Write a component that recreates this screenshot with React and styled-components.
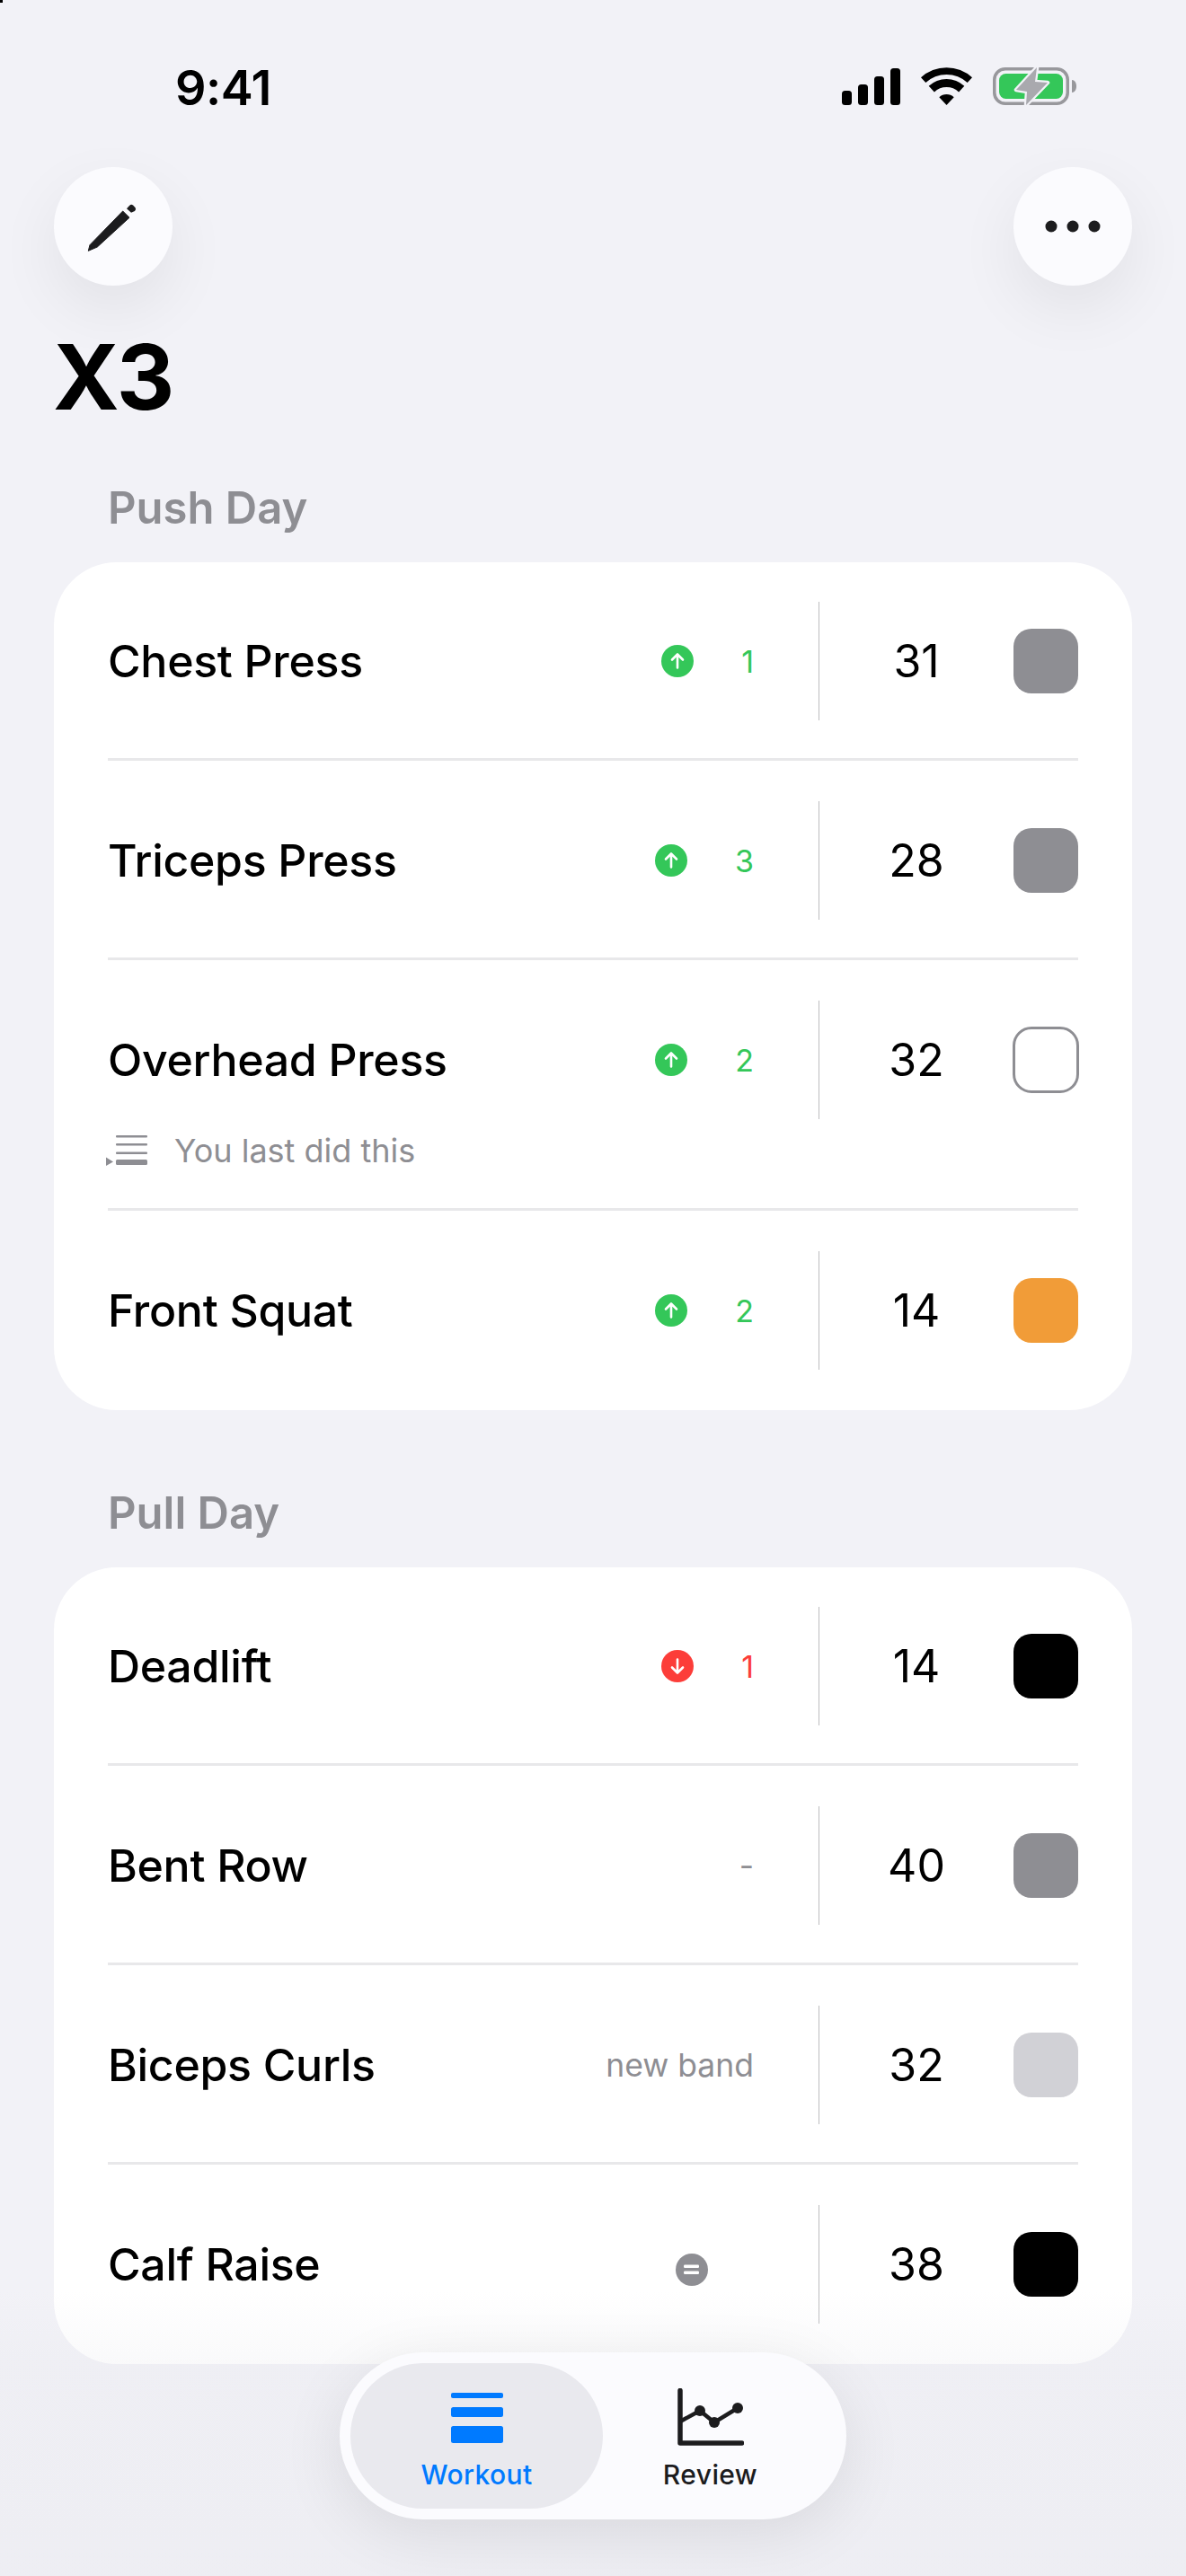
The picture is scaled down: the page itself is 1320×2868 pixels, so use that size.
import React from 'react'
import styled, { createGlobalStyle } from 'styled-components'

const GlobalStyle = createGlobalStyle`
    html, body {
        margin: 0;
        padding: 0;
        background: #f2f2f7;
    }
    * {
        box-sizing: border-box;
    }
`
const Page = styled.div`
    position: relative;
    width: 1320px;
    height: 2868px;
    padding-top: 70px;
    overflow: hidden;
    background: #f2f2f7;
    color: #000;
    font-family: Inter, "Liberation Sans", sans-serif;
`
const CornerDot = styled.div`
    position: absolute;
    top: 0;
    left: 0;
    width: 3px;
    height: 3px;
    background: #000;
`
const StatusBar = styled.div`
    display: flex;
    align-items: center;
    justify-content: space-between;
    height: 56px;
    padding: 0 122px 0 195px;
`
const Time = styled.div`
    font-size: 54px;
    font-weight: 600;
    line-height: 56px;
    letter-spacing: -0.5px;
`
const StatusIcons = styled.div`
    display: flex;
    align-items: center;
    gap: 23px;
    margin-top: -4px;
`
const Toolbar = styled.div`
    display: flex;
    justify-content: space-between;
    padding: 0 60px;
    margin-top: 60px;
`
const RoundButton = styled.div`
    width: 132px;
    height: 132px;
    border-radius: 50%;
    display: flex;
    align-items: center;
    justify-content: center;
    background: #fbfbfe;
    box-shadow: 0 26px 70px rgba(0, 0, 0, 0.07);
`
const Title = styled.h1`
    margin: 42px 0 56px;
    padding-left: 59px;
    font-size: 100px;
    font-weight: 700;
    line-height: 120px;
    letter-spacing: -1px;
`
const SectionLabel = styled.h2`
    margin: 0 0 30px;
    padding-left: 120px;
    font-size: 49px;
    font-weight: 600;
    line-height: 60px;
    color: #8e8e93;
`
const Card = styled.div`
    margin: 0 60px 85px;
    border-radius: 70px;
    background: #fff;
`
const Row = styled.div`
    margin: 0 60px;
    padding: 45px 0 42px;
    border-bottom: 3px solid #e8e8ea;
    &:first-child {
        padding-top: 44px;
    }
    &:last-child {
        padding-bottom: 45px;
        border-bottom: none;
    }
`
const RowMain = styled.div`
    display: flex;
    align-items: center;
    height: 132px;
`
const Name = styled.div`
    flex: 1;
    font-size: 50px;
    font-weight: 550;
    letter-spacing: -0.3px;
`
const Delta = styled.div`
    display: flex;
    align-items: center;
    gap: ${props => props.$gap}px;
    font-size: 34px;
    color: ${props => props.$color};
`
const Badge = styled.div`
    width: 36px;
    height: 36px;
    border-radius: 50%;
    display: flex;
    align-items: center;
    justify-content: center;
    background: ${props => props.$color};
`
const EqualBadge = styled(Badge)`
    margin: 12px 51px 0 0;
`
const Remark = styled.div`
    font-size: 35.5px;
    color: #8e8e93;
`
const Divider = styled.div`
    width: 1px;
    height: 132px;
    margin-left: 72px;
    background: #bdbdbf;
`
const Count = styled.div`
    width: 216px;
    text-align: center;
    font-size: 50px;
    font-weight: 400;
`
const Swatch = styled.div`
    width: 72px;
    height: 72px;
    border-radius: 20px;
    background: ${props => props.$color};
`
const EmptySwatch = styled.div`
    width: 74px;
    height: 74px;
    margin-right: -1px;
    margin-left: -1px;
    border-radius: 21px;
    border: 3px solid #8e8e93;
`
const Note = styled.div`
    display: flex;
    align-items: center;
    gap: 30px;
    height: 44px;
    margin: 13px 0 0 -2px;
    font-size: 36px;
    color: #8e8e93;
`
const BottomFade = styled.div`
    position: absolute;
    left: 0;
    right: 0;
    top: 2550px;
    bottom: 0;
    background: linear-gradient(to bottom, rgba(226, 226, 232, 0) 0, rgba(226, 226, 232, 0.2) 82px, rgba(226, 226, 232, 0.26) 100%);
`
const TabBar = styled.div`
    position: absolute;
    left: 378px;
    bottom: 63px;
    width: 564px;
    height: 186px;
    padding: 12px 32px 12px 12px;
    display: flex;
    border-radius: 93px;
    background: #fbfbfe;
    box-shadow: 0 16px 70px rgba(0, 0, 0, 0.09);
`
const Tab = styled.div`
    flex: ${props => (props.$active ? '0 0 281px' : '1')};
    padding-top: 28px;
    display: flex;
    flex-direction: column;
    align-items: center;
    border-radius: 81px;
    background: ${props => (props.$active ? '#e9e9ee' : 'transparent')};
    color: ${props => (props.$active ? '#007aff' : '#1c1c1e')};
`
const TabLabel = styled.div`
    margin-top: 14px;
    font-size: 30px;
    font-weight: 500;
    line-height: 36px;
    letter-spacing: 0.4px;
`

const SignalIcon = () => (
    <svg width="65" height="41" viewBox="0 0 65 41">
        <rect x="0" y="25" width="11" height="16" rx="3.5" />
        <rect x="18" y="18" width="11" height="23" rx="3.5" />
        <rect x="36" y="9" width="11" height="32" rx="3.5" />
        <rect x="54" y="0" width="11" height="41" rx="3.5" />
    </svg>
)
const WifiIcon = () => (
    <svg width="57" height="42" viewBox="0 0 57 42">
        <path d="M0 11.3A42 42 0 0 1 57 11.3L51.7 17.1A34 34 0 0 0 5.3 17.1Z" />
        <path d="M8.7 20.8A29 29 0 0 1 48.3 20.8L42.1 27.4A20 20 0 0 0 14.9 27.4Z" />
        <path d="M20.3 33.2A12 12 0 0 1 36.7 33.2L28.5 42Z" />
    </svg>
)
const BatteryIcon = () => (
    <svg width="93" height="46" viewBox="0 0 93 46">
        <rect x="1.75" y="3.75" width="81.5" height="38.5" rx="12" fill="none" stroke="#98989c" strokeWidth="3.5" />
        <rect x="7" y="9" width="71" height="28" rx="7.5" fill="#34c759" />
        <path d="M88 16c3 0 5 3 5 7s-2 7-5 7z" fill="#98989c" />
        <path d="M49 2L26 27L38 29L37 44L61 19L47 18Z" fill="#a9a9ae" stroke="#f2f2f7" strokeWidth="4.5" strokeLinejoin="round" paintOrder="stroke" />
    </svg>
)
const PencilIcon = () => (
    <svg width="60" height="60" viewBox="0 0 60 60" fill="#1c1c1e">
        <path d="M2.3 57.3L4 50.7L40.7 13L48 20.3L12.3 53Z" stroke="#1c1c1e" strokeWidth="1" strokeLinejoin="round" />
        <path d="M45 10.3L48 7Q50 5 52 6.5L54.5 9Q56 11 54 13L50 14.7Z" />
    </svg>
)
const MoreIcon = () => (
    <svg width="62" height="14" viewBox="0 0 62 14" fill="#1c1c1e">
        <circle cx="7" cy="7" r="6.5" />
        <circle cx="31" cy="7" r="6.5" />
        <circle cx="55" cy="7" r="6.5" />
    </svg>
)
const ArrowIcon = ({ down }) => (
    <svg width="20" height="20" viewBox="0 0 20 20" fill="none" stroke="#fff" strokeWidth="2.6" strokeLinecap="round" strokeLinejoin="round">
        {down ? <path d="M10 2.5V17M4 11.5L10 17.5L16 11.5" /> : <path d="M10 17.5V3M4 8.5L10 2.5L16 8.5" />}
    </svg>
)
const EqualIcon = () => (
    <svg width="18" height="12" viewBox="0 0 18 12" fill="#fff">
        <rect x="0" y="0.5" width="17" height="3.5" rx="1.2" />
        <rect x="0" y="7.5" width="17" height="3.5" rx="1.2" />
    </svg>
)
const NoteIcon = () => (
    <svg width="46" height="34" viewBox="0 0 46 34" fill="#8e8e93">
        <rect x="11" y="0" width="35" height="2.6" rx="1" />
        <rect x="11" y="9" width="35" height="2.6" rx="1" />
        <rect x="11" y="18.5" width="35" height="2.6" rx="1" />
        <rect x="11" y="27" width="35" height="6" rx="1.5" />
        <path d="M0 24.5L8 29.5L0 34Z" />
    </svg>
)
const WorkoutIcon = () => (
    <svg width="58" height="64" viewBox="0 0 58 64" fill="#007aff">
        <rect x="0" y="5" width="58" height="6" rx="2" />
        <rect x="0" y="21" width="58" height="11" rx="2.5" />
        <rect x="0" y="42" width="58" height="19" rx="2.5" />
    </svg>
)
const ReviewIcon = () => (
    <svg width="74" height="64" viewBox="0 0 74 64" fill="#1c1c1e" stroke="#1c1c1e">
        <path d="M3 2.5V61H71.5" fill="none" strokeWidth="5.5" strokeLinecap="round" strokeLinejoin="round" />
        <path d="M3 37L25 25L41 38L67 22" fill="none" strokeWidth="4.5" />
        <circle cx="25" cy="25" r="6" strokeWidth="0" />
        <circle cx="41" cy="38" r="6" strokeWidth="0" />
        <circle cx="67" cy="22" r="6" strokeWidth="0" />
    </svg>
)

const UP = '#34c759'
const DOWN = '#fc3d39'
const GRAY = '#8e8e93'

const sections = [
    {
        title: 'Push Day',
        rows: [
            { name: 'Chest Press', up: 1, count: 31, color: GRAY },
            { name: 'Triceps Press', up: 3, count: 28, color: GRAY },
            { name: 'Overhead Press', up: 2, count: 32, note: 'You last did this' },
            { name: 'Front Squat', up: 2, count: 14, color: '#f19c38' },
        ],
    },
    {
        title: 'Pull Day',
        rows: [
            { name: 'Deadlift', down: 1, count: 14, color: '#000' },
            { name: 'Bent Row', remark: '-', count: 40, color: GRAY },
            { name: 'Biceps Curls', remark: 'new band', count: 32, color: '#d1d1d6' },
            { name: 'Calf Raise', same: true, count: 38, color: '#000' },
        ],
    },
]

const Change = ({ row }) => {
    if (row.remark) return <Remark>{row.remark}</Remark>
    if (row.same) return <EqualBadge $color={GRAY}><EqualIcon /></EqualBadge>
    const value = row.up || row.down
    return (
        <Delta $color={row.up ? UP : DOWN} $gap={53}>
            <Badge $color={row.up ? UP : DOWN}><ArrowIcon down={!!row.down} /></Badge>
            {value}
        </Delta>
    )
}

const App = () => {
    return (
        <Page>
            <GlobalStyle />
            <CornerDot />
            <StatusBar>
                <Time>9:41</Time>
                <StatusIcons>
                    <SignalIcon />
                    <WifiIcon />
                    <BatteryIcon />
                </StatusIcons>
            </StatusBar>
            <Toolbar>
                <RoundButton><PencilIcon /></RoundButton>
                <RoundButton><MoreIcon /></RoundButton>
            </Toolbar>
            <Title>X3</Title>
            {sections.map(section => (
                <React.Fragment key={section.title}>
                    <SectionLabel>{section.title}</SectionLabel>
                    <Card>
                        {section.rows.map(row => (
                            <Row key={row.name}>
                                <RowMain>
                                    <Name>{row.name}</Name>
                                    <Change row={row} />
                                    <Divider />
                                    <Count>{row.count}</Count>
                                    {row.color ? <Swatch $color={row.color} /> : <EmptySwatch />}
                                </RowMain>
                                {row.note && (
                                    <Note>
                                        <NoteIcon />
                                        {row.note}
                                    </Note>
                                )}
                            </Row>
                        ))}
                    </Card>
                </React.Fragment>
            ))}
            <BottomFade />
            <TabBar>
                <Tab $active>
                    <WorkoutIcon />
                    <TabLabel>Workout</TabLabel>
                </Tab>
                <Tab>
                    <ReviewIcon />
                    <TabLabel>Review</TabLabel>
                </Tab>
            </TabBar>
        </Page>
    )
}

export default App
